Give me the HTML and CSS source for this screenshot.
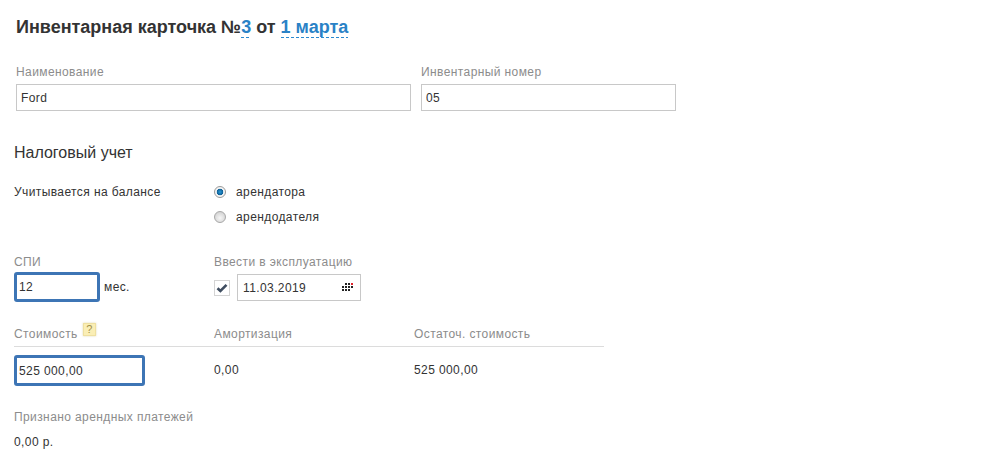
FILE: index.html
```html
<!DOCTYPE html>
<html lang="ru">
  <head>
    <meta charset="UTF-8" />
    <title>Инвентарная карточка</title>
    <link rel="stylesheet" href="styles.css">
  </head>
  <body>
    <div class="card">
      <h1 class="title">Инвентарная карточка №<span class="link">3</span> от <span class="link">1 марта</span></h1>

      <div class="name-row">
        <div class="name-field">
          <div class="caption">Наименование</div>
          <input class="text-input" type="text" value="Ford" />
        </div>
        <div class="number-field">
          <div class="caption">Инвентарный номер</div>
          <input class="text-input" type="text" value="05" />
        </div>
      </div>

      <h2 class="section-title">Налоговый учет</h2>

      <div class="balance-row">
        <div class="col-first">Учитывается на балансе</div>
        <div class="radio-list">
          <div class="radio-item">
            <span class="radio radio-on"></span>
            <span>арендатора</span>
          </div>
          <div class="radio-item">
            <span class="radio"></span>
            <span>арендодателя</span>
          </div>
        </div>
      </div>

      <div class="term-row">
        <div class="col-first">
          <div class="caption">СПИ</div>
          <div class="term-value">
            <input class="text-input focus term-input" type="text" value="12" />
            <span class="unit">мес.</span>
          </div>
        </div>
        <div>
          <div class="caption">Ввести в эксплуатацию</div>
          <div class="date-value">
            <span class="check">
              <svg width="12" height="10" viewBox="0 0 12 10"><path d="M1.5 5.2 4.4 8 10.5 1.8" fill="none" stroke="#3f4d60" stroke-width="2.6" /></svg>
            </span>
            <div class="date-input">
              <span>11.03.2019</span>
              <svg class="calendar" width="11" height="9" viewBox="0 0 11 9">
                <g fill="#222">
                  <rect x="3" y="0" width="2" height="2" />
                  <rect x="6" y="0" width="2" height="2" />
                  <rect x="0" y="3" width="2" height="2" />
                  <rect x="3" y="3" width="2" height="2" />
                  <rect x="6" y="3" width="2" height="2" />
                  <rect x="9" y="3" width="2" height="2" />
                  <rect x="0" y="6" width="2" height="2" />
                  <rect x="3" y="6" width="2" height="2" />
                  <rect x="6" y="6" width="2" height="2" />
                </g>
                <rect x="9" y="0" width="2" height="2" fill="#e0212b" />
              </svg>
            </div>
          </div>
        </div>
      </div>

      <div class="cost-head">
        <div class="col-first caption-line">Стоимость <span class="hint">?</span></div>
        <div class="col-second">Амортизация</div>
        <div>Остаточ. стоимость</div>
      </div>
      <div class="cost-row">
        <div class="col-first">
          <input class="text-input focus cost-input" type="text" value="525 000,00" />
        </div>
        <div class="col-second cost-value">0,00</div>
        <div class="cost-value">525 000,00</div>
      </div>

      <div class="caption rent-caption">Признано арендных платежей</div>
      <div class="rent-value">0,00 р.</div>
    </div>
  </body>
</html>
```

FILE: styles.css
```css
body {
  margin: 0;
  background-color: #fff;
  font-family: "Liberation Sans", Arial, sans-serif;
  font-size: 12px;
  color: #333;
  letter-spacing: 0.4px;
}

.card {
  padding: 15px 14px 0;
}

.title {
  margin: 0 0 0 2px;
  font-size: 18px;
  line-height: 24px;
  font-weight: bold;
  color: #333;
  letter-spacing: 0;
}

.link {
  padding-bottom: 1px;
  color: #2a82c6;
  background: repeating-linear-gradient(90deg, #2a8ad0 0, #2a8ad0 3px, transparent 3px, transparent 5px) left bottom / 100% 1px no-repeat;
}

.caption {
  color: #8c8c8c;
  line-height: 16px;
}

.name-row {
  display: flex;
  gap: 10px;
  margin: 25px 0 0 2px;
}

.name-field {
  width: 395px;
}

.number-field {
  width: 255px;
}

.text-input {
  display: block;
  box-sizing: border-box;
  width: 100%;
  height: 27px;
  margin-top: 4px;
  padding: 0 4px;
  border: 1px solid #c8c8c8;
  outline: none;
  font-family: inherit;
  font-size: 12px;
  letter-spacing: 0.4px;
  color: #333;
}

.focus {
  border: 3px solid #3d75b5;
  border-radius: 3px;
  padding: 0 2px;
}

.section-title {
  margin: 33px 0 0;
  font-size: 16px;
  line-height: 18px;
  font-weight: normal;
  letter-spacing: 0;
}

.col-first {
  width: 200px;
  flex-shrink: 0;
}

.col-second {
  width: 200px;
  flex-shrink: 0;
}

.balance-row {
  display: flex;
  margin-top: 23px;
}

.radio-list {
  display: flex;
  flex-direction: column;
  gap: 11px;
}

.radio-item {
  display: flex;
  align-items: center;
  gap: 10px;
  height: 14px;
}

.radio {
  box-sizing: border-box;
  width: 12px;
  height: 12px;
  border-radius: 50%;
  border: 1px solid #a8a8a8;
  background: radial-gradient(circle at 50% 60%, #f6f6f6, #c9c9c9);
}

.radio-on {
  border-color: #9a9a9a;
  background: radial-gradient(circle, #2a9ad8 0, #0e5f96 3px, #f4f4f4 3.6px);
}

.term-row {
  display: flex;
  margin-top: 30px;
}

.term-value {
  display: flex;
  align-items: center;
}

.term-input {
  width: 86px;
  height: 30px;
  margin-top: 2px;
}

.unit {
  margin-left: 4px;
  margin-top: 2px;
}

.date-value {
  display: flex;
  align-items: center;
  gap: 7px;
  margin-top: 4px;
}

.check {
  box-sizing: border-box;
  display: flex;
  align-items: center;
  justify-content: center;
  width: 16px;
  height: 16px;
  border: 1px solid #d4d4d4;
}

.date-input {
  box-sizing: border-box;
  display: flex;
  align-items: center;
  justify-content: space-between;
  width: 124px;
  height: 27px;
  padding: 0 7px 0 5px;
  border: 1px solid #c8c8c8;
}

.cost-head {
  display: flex;
  width: 590px;
  margin-top: 24px;
  padding-bottom: 4px;
  border-bottom: 1px solid #dcdcdc;
  color: #8c8c8c;
  line-height: 16px;
}

.caption-line {
  display: flex;
  align-items: flex-start;
  gap: 5px;
}

.hint {
  box-sizing: border-box;
  width: 13px;
  height: 13px;
  margin-top: -3px;
  border: 1px solid #efe0a0;
  background-color: #faeeb5;
  box-shadow: 0 0 2px #e0d8b0;
  color: #a0904a;
  font-size: 11px;
  line-height: 11px;
  text-align: center;
  letter-spacing: 0;
}

.cost-row {
  display: flex;
  align-items: center;
  margin-top: 8px;
}

.cost-input {
  width: 131px;
  height: 31px;
  margin-top: 0;
}

.cost-value {
  padding-bottom: 2px;
}

.rent-caption {
  margin-top: 23px;
}

.rent-value {
  margin-top: 9px;
  line-height: 16px;
}
```
